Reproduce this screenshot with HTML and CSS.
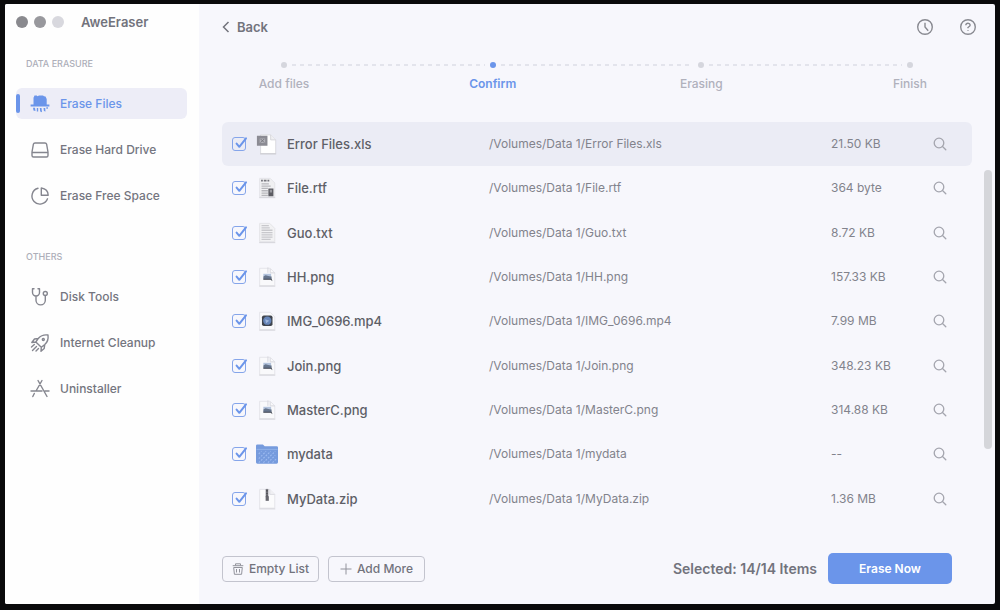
FILE: index.html
```html
<!DOCTYPE html>
<html lang="en">
<head>
<meta charset="utf-8">
<meta name="viewport" content="width=device-width, initial-scale=1">
<title>AweEraser</title>
<link rel="stylesheet" href="styles.css">
</head>
<body>
<svg class="defs" aria-hidden="true">
  <symbol id="tick" viewBox="0 0 16 16"><path d="M4.600 7.600l2.700 3.200L14 2.400" fill="none" stroke="#6b95ea" stroke-width="2" stroke-linecap="round" stroke-linejoin="round"/></symbol>
  <symbol id="search" viewBox="0 0 14 14"><g fill="none" stroke="currentColor" stroke-width="1.300" stroke-linecap="round"><circle cx="6" cy="6" r="4.800"/><path d="M9.500 9.500l3.300 3.300"/></g></symbol>
  <symbol id="png" viewBox="0 0 24 24"><path d="M4 2.500h11.500l5 5v14H4z" fill="#f9f9fb" stroke="#e3e3e8"/><path d="M3.500 22h17.500" stroke="#d2d2d8"/><path d="M13 1.500v6M15.500 3v4.500h5" fill="none" stroke="#d5d5dc"/><path d="M8 8.500h8.500v3H8z" fill="#b3c3dc"/><path d="M8 11.500l2.500-1.500 3 1 3.500.500v3H8z" fill="#66758c"/><path d="M8 14h9l1 2.500-2-1.500H8z" fill="#454a54"/></symbol>
</svg>
<div class="window">
  <aside class="sidebar">
    <header class="titlebar">
      <span class="light light-close"></span><span class="light light-min"></span><span class="light light-zoom"></span>
      <h1 class="app-name">AweEraser</h1>
    </header>
    <nav class="nav">
      <section class="group">
        <h2 class="group-title">DATA ERASURE</h2>
        <a class="nav-item active" href="#files"><svg class="nav-icon" viewBox="0 0 20 20"><g fill="#6b95ea"><path d="M3.500 11.500V3.800L4.500 1.500h2.200l.8.800L9 1.500h4l1 .8 1.500.2L16.700 5v6.500z"/><path d="M.6 10.500h18.800v2.100H.6z"/><path d="M3 13.800h2l.5 3.200-2-.6zM6.800 14h1.400v3.500H6.800zM9.800 14h1.700l.5 4.200-1.800-.6zM13.500 14h1.700l.3 3.500-1.600-.5zM16.500 13h1.200v2h-1.200z"/></g></svg>Erase Files</a>
        <a class="nav-item" href="#drive"><svg class="nav-icon" viewBox="0 0 20 20"><path d="M5 3h10q1.300 0 1.600 1.200L18 12v3.500q0 1.500-1.500 1.500h-13Q2 17 2 15.500V12l1.400-7.800Q3.700 3 5 3zM2 12.500h16"/></svg>Erase Hard Drive</a>
        <a class="nav-item" href="#space"><svg class="nav-icon" viewBox="0 0 20 20"><path d="M8 2.300A8 8 0 1 0 17.500 12.800M11.300 2v7.200h6.900Q18 3 11.300 2z"/></svg>Erase Free Space</a>
      </section>
      <section class="group">
        <h2 class="group-title">OTHERS</h2>
        <a class="nav-item" href="#disk"><svg class="nav-icon" viewBox="0 0 20 20"><path d="M4 1.800H2.500v3.700a3.500 3.500 0 0 0 7 0V1.800H8M6 9v4.200a4.600 4.600 0 0 0 9.300 0V8.500"/><circle cx="15.300" cy="6.500" r="2"/></svg>Disk Tools</a>
        <a class="nav-item" href="#internet"><svg class="nav-icon" viewBox="0 0 20 20"><path d="M18 2q-6-.8-9.500 3.200L5.800 9l5.500 5.300 3.500-2.800Q18.800 8 18 2zM8.300 5.500L4.500 6 1.800 9.500l4-.5M14.700 11.800l-.5 3.700-3.200 2.700.3-4M4.300 11.500L1.500 14M6.500 13.500L2.500 17.500M8.500 15.500L6 18"/><circle cx="13.300" cy="6.500" r="1"/></svg>Internet Cleanup</a>
        <a class="nav-item" href="#uninstall"><svg class="nav-icon" viewBox="0 0 20 20"><path d="M8 1.500l9 16M12 1.500L6.300 11.500M1 12h11M15 12h4M4.300 14.500L2.800 17.500"/></svg>Uninstaller</a>
      </section>
    </nav>
  </aside>
  <main class="main">
    <header class="toolbar">
      <button class="back" type="button"><svg class="chevron" viewBox="0 0 8 12"><path d="M6.500 1L1.500 6l5 5"/></svg>Back</button>
      <div class="tools">
        <button class="tool" type="button" aria-label="History"><svg viewBox="0 0 18 18"><circle cx="9" cy="9" r="7.300"/><path d="M9 4.800V9l3.200 3.800"/></svg></button>
        <button class="tool" type="button" aria-label="Help"><svg viewBox="0 0 18 18"><circle cx="9" cy="9" r="7.300"/><path d="M6.800 7.200Q7 5.200 9 5.200t2.200 1.900Q11.200 8.300 9 9.500v.8M9 12.300v.7"/></svg></button>
      </div>
    </header>
    <ol class="steps">
      <li class="step"><span class="dot"></span>Add files</li>
      <li class="dash" aria-hidden="true"></li>
      <li class="step current" aria-current="step"><span class="dot"></span>Confirm</li>
      <li class="dash" aria-hidden="true"></li>
      <li class="step"><span class="dot"></span>Erasing</li>
      <li class="dash" aria-hidden="true"></li>
      <li class="step"><span class="dot"></span>Finish</li>
    </ol>
    <div class="list">
      <table class="files">
        <colgroup><col class="col-check"><col class="col-icon"><col class="col-name"><col class="col-path"><col class="col-size"><col class="col-find"></colgroup>
        <tbody>
        <tr class="selected">
          <td><span class="check"><input type="checkbox" id="f1" checked><svg><use href="#tick"/></svg></span></td>
          <td><svg class="file-icon" viewBox="0 0 24 24"><path d="M5 2h11l5.500 5.500V22.500H5z" fill="#fff" stroke="#d9d9de"/><path d="M16 2v5.500h5.500" fill="#f0f0f3" stroke="#d4d4da"/><path d="M4.500 22.800h17.500" stroke="#c6c6cc"/><path d="M1 3h11.500v11H1z" fill="#8b8b93"/><path d="M4 6h6v5H4z" fill="#b1b1b8"/><path d="M5 6.500l4 4M9 6.500l-4 4" stroke="#73737b"/></svg></td>
          <td class="name"><label for="f1">Error Files.xls</label></td><td class="path">/Volumes/Data 1/Error Files.xls</td><td class="size">21.50 KB</td>
          <td><button class="find" type="button" aria-label="Locate Error Files.xls"><svg><use href="#search"/></svg></button></td>
        </tr>
        <tr>
          <td><span class="check"><input type="checkbox" id="f2" checked><svg><use href="#tick"/></svg></span></td>
          <td><svg class="file-icon" viewBox="0 0 24 24"><path d="M4 1.500h11.500l5 5v15H4z" fill="#f0f0f2" stroke="#e3e3e7"/><path d="M3.500 22.500h17.500" stroke="#d0d0d6"/><path d="M5.500 4h2m1 0h3m1 0h2" stroke="#77777e" stroke-width="2"/><path d="M6 7.500h8M6 10h10M6 12.500h7M6 15h7M6 17.500h7M6 20h7" stroke="#b6b6bb" stroke-width="1.400"/><path d="M13.500 12.500h5.500V21h-5.500z" fill="#5c5c63"/><path d="M15 14h2.500v3H15z" fill="#98989e"/></svg></td>
          <td class="name"><label for="f2">File.rtf</label></td><td class="path">/Volumes/Data 1/File.rtf</td><td class="size">364 byte</td>
          <td><button class="find" type="button" aria-label="Locate File.rtf"><svg><use href="#search"/></svg></button></td>
        </tr>
        <tr>
          <td><span class="check"><input type="checkbox" id="f3" checked><svg><use href="#tick"/></svg></span></td>
          <td><svg class="file-icon" viewBox="0 0 24 24"><path d="M4 1.500h11l5.500 5.500v14.500H4z" fill="#f2f2f4" stroke="#e2e2e6"/><path d="M3.500 22.500h17.500" stroke="#d0d0d6"/><path d="M6 4h8M6 6.500h9M6 9h12M6 11.500h12M6 14h12M6 16.500h12M6 19h10" stroke="#c8c8cc" stroke-width="1.400"/></svg></td>
          <td class="name"><label for="f3">Guo.txt</label></td><td class="path">/Volumes/Data 1/Guo.txt</td><td class="size">8.72 KB</td>
          <td><button class="find" type="button" aria-label="Locate Guo.txt"><svg><use href="#search"/></svg></button></td>
        </tr>
        <tr>
          <td><span class="check"><input type="checkbox" id="f4" checked><svg><use href="#tick"/></svg></span></td>
          <td><svg class="file-icon"><use href="#png"/></svg></td>
          <td class="name"><label for="f4">HH.png</label></td><td class="path">/Volumes/Data 1/HH.png</td><td class="size">157.33 KB</td>
          <td><button class="find" type="button" aria-label="Locate HH.png"><svg><use href="#search"/></svg></button></td>
        </tr>
        <tr>
          <td><span class="check"><input type="checkbox" id="f5" checked><svg><use href="#tick"/></svg></span></td>
          <td><svg class="file-icon" viewBox="0 0 24 24"><path d="M4 2.500h11.500l5 5v14H4z" fill="#f9f9fb" stroke="#e3e3e8"/><path d="M3.500 22h17.500" stroke="#d2d2d8"/><rect x="6.500" y="6" width="11.500" height="11.500" rx="2" fill="#3f444d"/><circle cx="12.300" cy="11.700" r="4.500" fill="#6685b8"/><path d="M10 10l4.500 1.700L11 14.500z" fill="#9fb6dc"/></svg></td>
          <td class="name"><label for="f5">IMG_0696.mp4</label></td><td class="path">/Volumes/Data 1/IMG_0696.mp4</td><td class="size">7.99 MB</td>
          <td><button class="find" type="button" aria-label="Locate IMG_0696.mp4"><svg><use href="#search"/></svg></button></td>
        </tr>
        <tr>
          <td><span class="check"><input type="checkbox" id="f6" checked><svg><use href="#tick"/></svg></span></td>
          <td><svg class="file-icon"><use href="#png"/></svg></td>
          <td class="name"><label for="f6">Join.png</label></td><td class="path">/Volumes/Data 1/Join.png</td><td class="size">348.23 KB</td>
          <td><button class="find" type="button" aria-label="Locate Join.png"><svg><use href="#search"/></svg></button></td>
        </tr>
        <tr>
          <td><span class="check"><input type="checkbox" id="f7" checked><svg><use href="#tick"/></svg></span></td>
          <td><svg class="file-icon"><use href="#png"/></svg></td>
          <td class="name"><label for="f7">MasterC.png</label></td><td class="path">/Volumes/Data 1/MasterC.png</td><td class="size">314.88 KB</td>
          <td><button class="find" type="button" aria-label="Locate MasterC.png"><svg><use href="#search"/></svg></button></td>
        </tr>
        <tr>
          <td><span class="check"><input type="checkbox" id="f8" checked><svg><use href="#tick"/></svg></span></td>
          <td><svg class="file-icon" viewBox="0 0 24 24"><path d="M0 3q0-1.500 1.500-1.500h6l2 2h13q1.500 0 1.500 1.500v16q0 1.500-1.500 1.500h-21Q0 22.500 0 21z" fill="#769bdd"/><path d="M.5 7h23" stroke="#93b3ea"/><path d="M3 12l3-3M3 17l8-8M3 21.500L16 9M8 21.500L21 9M13 21.500l8-8M18 21.500l4-4" stroke="#9cbaf0" stroke-width="1.200" stroke-dasharray="2 1.500"/></svg></td>
          <td class="name"><label for="f8">mydata</label></td><td class="path">/Volumes/Data 1/mydata</td><td class="size">--</td>
          <td><button class="find" type="button" aria-label="Locate mydata"><svg><use href="#search"/></svg></button></td>
        </tr>
        <tr>
          <td><span class="check"><input type="checkbox" id="f9" checked><svg><use href="#tick"/></svg></span></td>
          <td><svg class="file-icon" viewBox="0 0 24 24"><path d="M4 1.500h11l5.500 5.500v15H4z" fill="#fbfbfc" stroke="#e3e3e8"/><path d="M15 1.500V7h5.500" fill="#f0f0f3" stroke="#dadae0"/><path d="M3.500 22.800h17.500" stroke="#d2d2d8"/><path d="M12 1v9" stroke="#8d8d93" stroke-width="3"/><path d="M12 2v12" stroke="#515157" stroke-width="2" stroke-dasharray="2 1"/><path d="M10.500 9h3.500v5h-3.500z" fill="#66666d"/></svg></td>
          <td class="name"><label for="f9">MyData.zip</label></td><td class="path">/Volumes/Data 1/MyData.zip</td><td class="size">1.36 MB</td>
          <td><button class="find" type="button" aria-label="Locate MyData.zip"><svg><use href="#search"/></svg></button></td>
        </tr>
        </tbody>
      </table>
      <div class="scrollbar" aria-hidden="true"></div>
    </div>
    <footer class="actions">
      <button class="btn" type="button"><svg viewBox="0 0 12 12"><path d="M.7 2.700h10.600M3.500 2.500V.8h5v1.700M1.700 4.500l.7 6.800h7.200l.7-6.800zM4.500 6v3.500M7.500 6v3.500"/></svg>Empty List</button>
      <button class="btn" type="button"><svg viewBox="0 0 12 12"><path d="M6 .5v11M.5 6h11"/></svg>Add More</button>
      <p class="count">Selected: 14/14 Items</p>
      <button class="primary" type="button">Erase Now</button>
    </footer>
  </main>
</div>
</body>
</html>
```

FILE: styles.css
```css
* { box-sizing: border-box; }

body {
  margin: 0;
  min-height: 100vh;
  display: flex;
  padding: 4px 5px 6px;
  background: #0a0a0b;
  color: #72737c;
  font-family: Inter, "Liberation Sans", sans-serif;
  font-size: 12px;
  line-height: 16px;
}

button {
  padding: 0;
  border: 0;
  background: none;
  color: inherit;
  font: inherit;
  cursor: pointer;
}

svg { display: block; }
.defs { position: absolute; width: 0; height: 0; }

.window {
  flex: 1;
  display: flex;
  background: #f7f7fc;
  border-radius: 2px;
  overflow: hidden;
}

/* Sidebar */
.sidebar {
  flex: none;
  width: 194px;
  padding: 10px 12px 0 11px;
  background: #fefefe;
}

.titlebar { display: flex; align-items: center; gap: 6px; }
.light { width: 12px; height: 12px; border-radius: 50%; }
.light-close { background: #89898e; }
.light-min { background: #98989d; }
.light-zoom { background: #d8d8de; }

.app-name {
  margin: 0 0 0 11px;
  font-size: 13px;
  font-weight: 600;
  line-height: 16px;
}

.nav { display: flex; flex-direction: column; gap: 40px; padding-top: 28px; }
.group { display: flex; flex-direction: column; gap: 15px; }

.group-title {
  margin: 0 0 3px 10px;
  color: #adaeb9;
  font-size: 9px;
  font-weight: 500;
  line-height: 12px;
}

.nav-item {
  display: flex;
  align-items: center;
  gap: 10px;
  height: 31px;
  padding-left: 14px;
  border-radius: 6px;
  color: #74757f;
  font-weight: 500;
  text-decoration: none;
}

.nav-item.active {
  position: relative;
  background: #ededf7;
  color: #6b95ea;
}

.nav-item.active::before {
  content: "";
  position: absolute;
  left: 0;
  top: 6px;
  width: 4px;
  height: 19px;
  border-radius: 2px;
  background: #6b95ea;
}

.nav-icon {
  width: 20px;
  height: 20px;
  fill: none;
  stroke: #85868f;
  stroke-width: 1.4;
  stroke-linecap: round;
  stroke-linejoin: round;
}

.active .nav-icon { stroke: none; }

/* Main pane */
.main {
  flex: 1;
  min-width: 0;
  display: flex;
  flex-direction: column;
  padding: 13px 23px 20px;
}

.toolbar {
  display: flex;
  justify-content: space-between;
  align-items: center;
  margin-right: -5px;
}

.back {
  display: flex;
  align-items: center;
  gap: 7px;
  font-size: 13px;
  font-weight: 600;
}

.chevron { width: 8px; height: 12px; }
.chevron path { fill: none; stroke: currentColor; stroke-width: 1.5; }
.tools { display: flex; gap: 25px; }
.tool svg { width: 18px; height: 18px; fill: none; stroke: #898a91; stroke-width: 1.4; }
.tools .tool { width: 18px; height: 20px; }

.steps {
  display: flex;
  margin: 25px 32px 30px;
  padding: 0;
  list-style: none;
  color: #b0b1bc;
  font-weight: 500;
}

.step {
  width: 60px;
  display: flex;
  flex-direction: column;
  align-items: center;
  gap: 8px;
  white-space: nowrap;
}

.current { color: #6b95ea; font-weight: 600; }
.dot { width: 6px; height: 6px; border-radius: 50%; background: #d5d6dd; }
.current .dot { background: #6b95ea; }

.dash {
  flex: 1;
  height: 2px;
  margin: 2px -22px 0;
  background: repeating-linear-gradient(90deg, #e3e4ec 0 4px, transparent 4px 8px);
}

/* File list */
.list { flex: 1; position: relative; display: grid; }

.files {
  width: 100%;
  height: 100%;
  border-collapse: collapse;
  table-layout: fixed;
}

.col-check { width: 34px; }
.col-icon { width: 31px; }
.col-name { width: 202px; }
.col-size { width: 102px; }
.col-find { width: 39px; }

.files td { padding: 0; vertical-align: middle; }
.files td:first-child { padding-left: 10px; border-radius: 6px 0 0 6px; }
.files td:last-child { border-radius: 0 6px 6px 0; }
.selected td { background: #ebecf5; }
.file-icon { width: 22px; height: 22px; }
.name { color: #5e5f67; font-size: 13px; font-weight: 500; }
.path, .size { color: #82838c; }

.check { display: grid; width: 16px; height: 16px; }
.check > * { grid-area: 1 / 1; }

.check input {
  appearance: none;
  width: 14px;
  height: 14px;
  margin: 1px 2px 1px 0;
  border: 1px solid #85a5ea;
  border-radius: 3px;
}

.check svg { width: 16px; height: 16px; pointer-events: none; }
.check input:not(:checked) + svg { visibility: hidden; }
.find { display: block; color: #a4a5ae; }
.find svg { width: 14px; height: 14px; }

.scrollbar {
  position: absolute;
  top: 12%;
  right: -20px;
  width: 8px;
  height: 70%;
  border-radius: 4px;
  background: #d5d6da;
}

/* Footer */
.actions {
  display: flex;
  align-items: center;
  gap: 9px;
  padding: 32px 20px 0 0;
}

.btn {
  display: flex;
  align-items: center;
  justify-content: center;
  gap: 5px;
  width: 97px;
  height: 26px;
  border: 1px solid #c3c4ce;
  border-radius: 4px;
  font-weight: 500;
}

.btn svg { width: 12px; height: 12px; fill: none; stroke: #92939c; }
.count { margin: 0 2px 0 auto; font-size: 14px; font-weight: 600; }

.primary {
  width: 124px;
  height: 31px;
  border-radius: 5px;
  background: #6b95ea;
  color: #fff;
  font-weight: 600;
}
```
